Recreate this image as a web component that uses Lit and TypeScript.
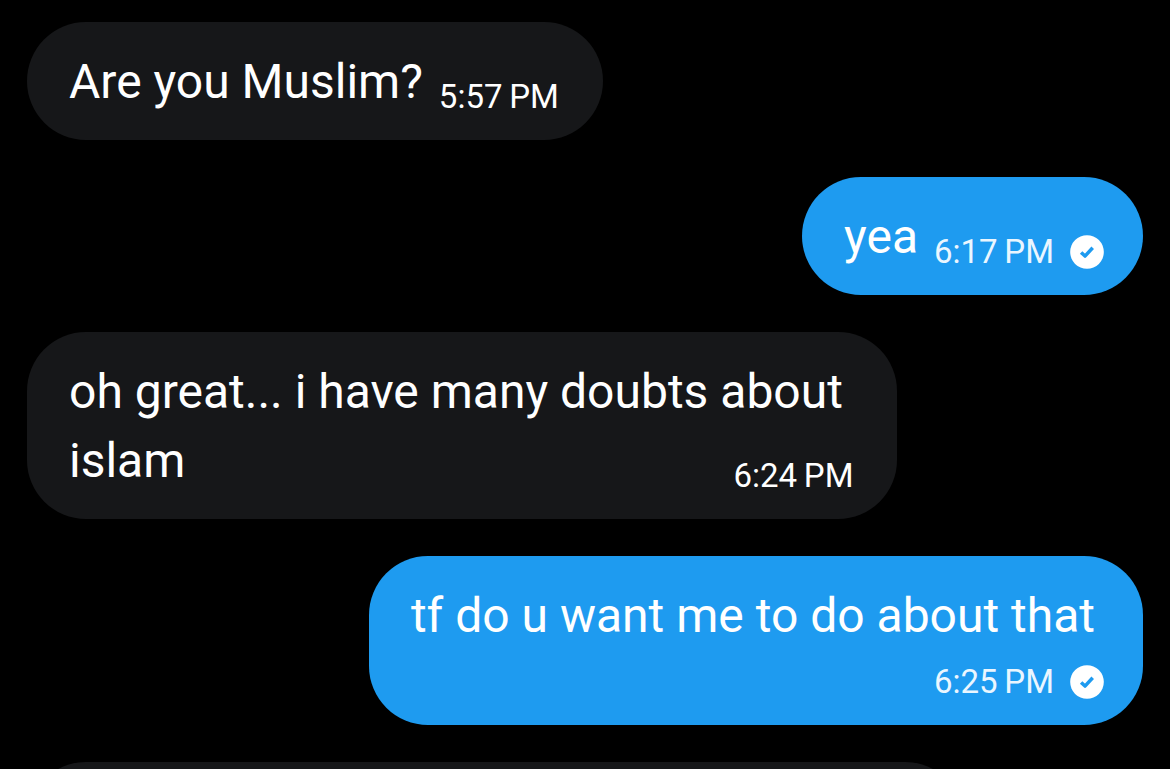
import { LitElement, html, css, nothing } from "lit";
import { customElement, property } from "lit/decorators.js";
import { classMap } from "lit/directives/class-map.js";

interface Message {
  text: string;
  time: string;
  sent: boolean;
  stacked?: boolean;
}

const MESSAGES: Message[] = [
  { text: "Are you Muslim?", time: "5:57\u2009PM", sent: false },
  { text: "yea", time: "6:17\u2009PM", sent: true },
  { text: "oh great... i have many doubts about islam", time: "6:24\u2009PM", sent: false },
  { text: "tf do u want me to do about that", time: "6:25\u2009PM", sent: true, stacked: true },
];

@customElement("chat-bubble")
export class ChatBubble extends LitElement {
  @property({ attribute: false }) message!: Message;

  static styles = css`
    :host {
      display: block;
    }
    .bubble {
      display: flow-root;
      box-sizing: border-box;
      padding: 25px 44px 24px 42px;
      border-radius: 59px;
      background: #161719;
      color: #fff;
    }
    .sent {
      padding-right: 39px;
      background: #1e9bf0;
    }
    .text {
      padding-right: 9px;
      font-size: 48px;
      line-height: 69px;
    }
    .meta {
      float: right;
      display: flex;
      align-items: center;
      gap: 16px;
      height: 38px;
      margin: 31px 0 0 7px;
      font-size: 33px;
      line-height: 38px;
      white-space: nowrap;
    }
    .sent .meta {
      color: #eaf6ff;
    }
    .stacked .text {
      display: block;
    }
    .stacked .meta {
      margin-top: 13px;
    }
    .check {
      display: block;
      width: 34px;
      height: 34px;
    }
  `;

  render() {
    const { text, time, sent, stacked } = this.message;
    return html`<div class=${classMap({ bubble: true, sent, stacked: !!stacked })}><span class="text">${text}</span><span class="meta"><time>${time}</time>${sent
      ? html`<svg class="check" viewBox="0 0 34 34" role="img" aria-label="Seen">
          <circle cx="17" cy="17" r="16.8" fill="#fff" />
          <path d="M11.1 17.4 L15 21.1 L22.7 12.8" fill="none" stroke="#1e9bf0" stroke-width="3.5" stroke-linejoin="round" />
        </svg>`
      : nothing}</span></div>`;
  }
}

@customElement("app-root")
export class AppRoot extends LitElement {
  static styles = css`
    :host {
      display: block;
      box-sizing: border-box;
      height: 100vh;
      overflow: hidden;
      background: #000;
      font-family: Roboto, "Liberation Sans", sans-serif;
    }
    .thread {
      display: flex;
      flex-direction: column;
      align-items: flex-start;
      gap: 37px;
      padding: 22px 27px;
    }
    .item {
      max-width: 78%;
    }
    .own {
      align-self: flex-end;
    }
    .pending {
      width: 84%;
      height: 118px;
      border-radius: 59px;
      background: #161719;
    }
  `;

  render() {
    return html`
      <main class="thread">
        ${MESSAGES.map(
          (m) => html`<chat-bubble class=${classMap({ item: true, own: m.sent })} .message=${m}></chat-bubble>`
        )}
        <div class="pending"></div>
      </main>
    `;
  }
}
